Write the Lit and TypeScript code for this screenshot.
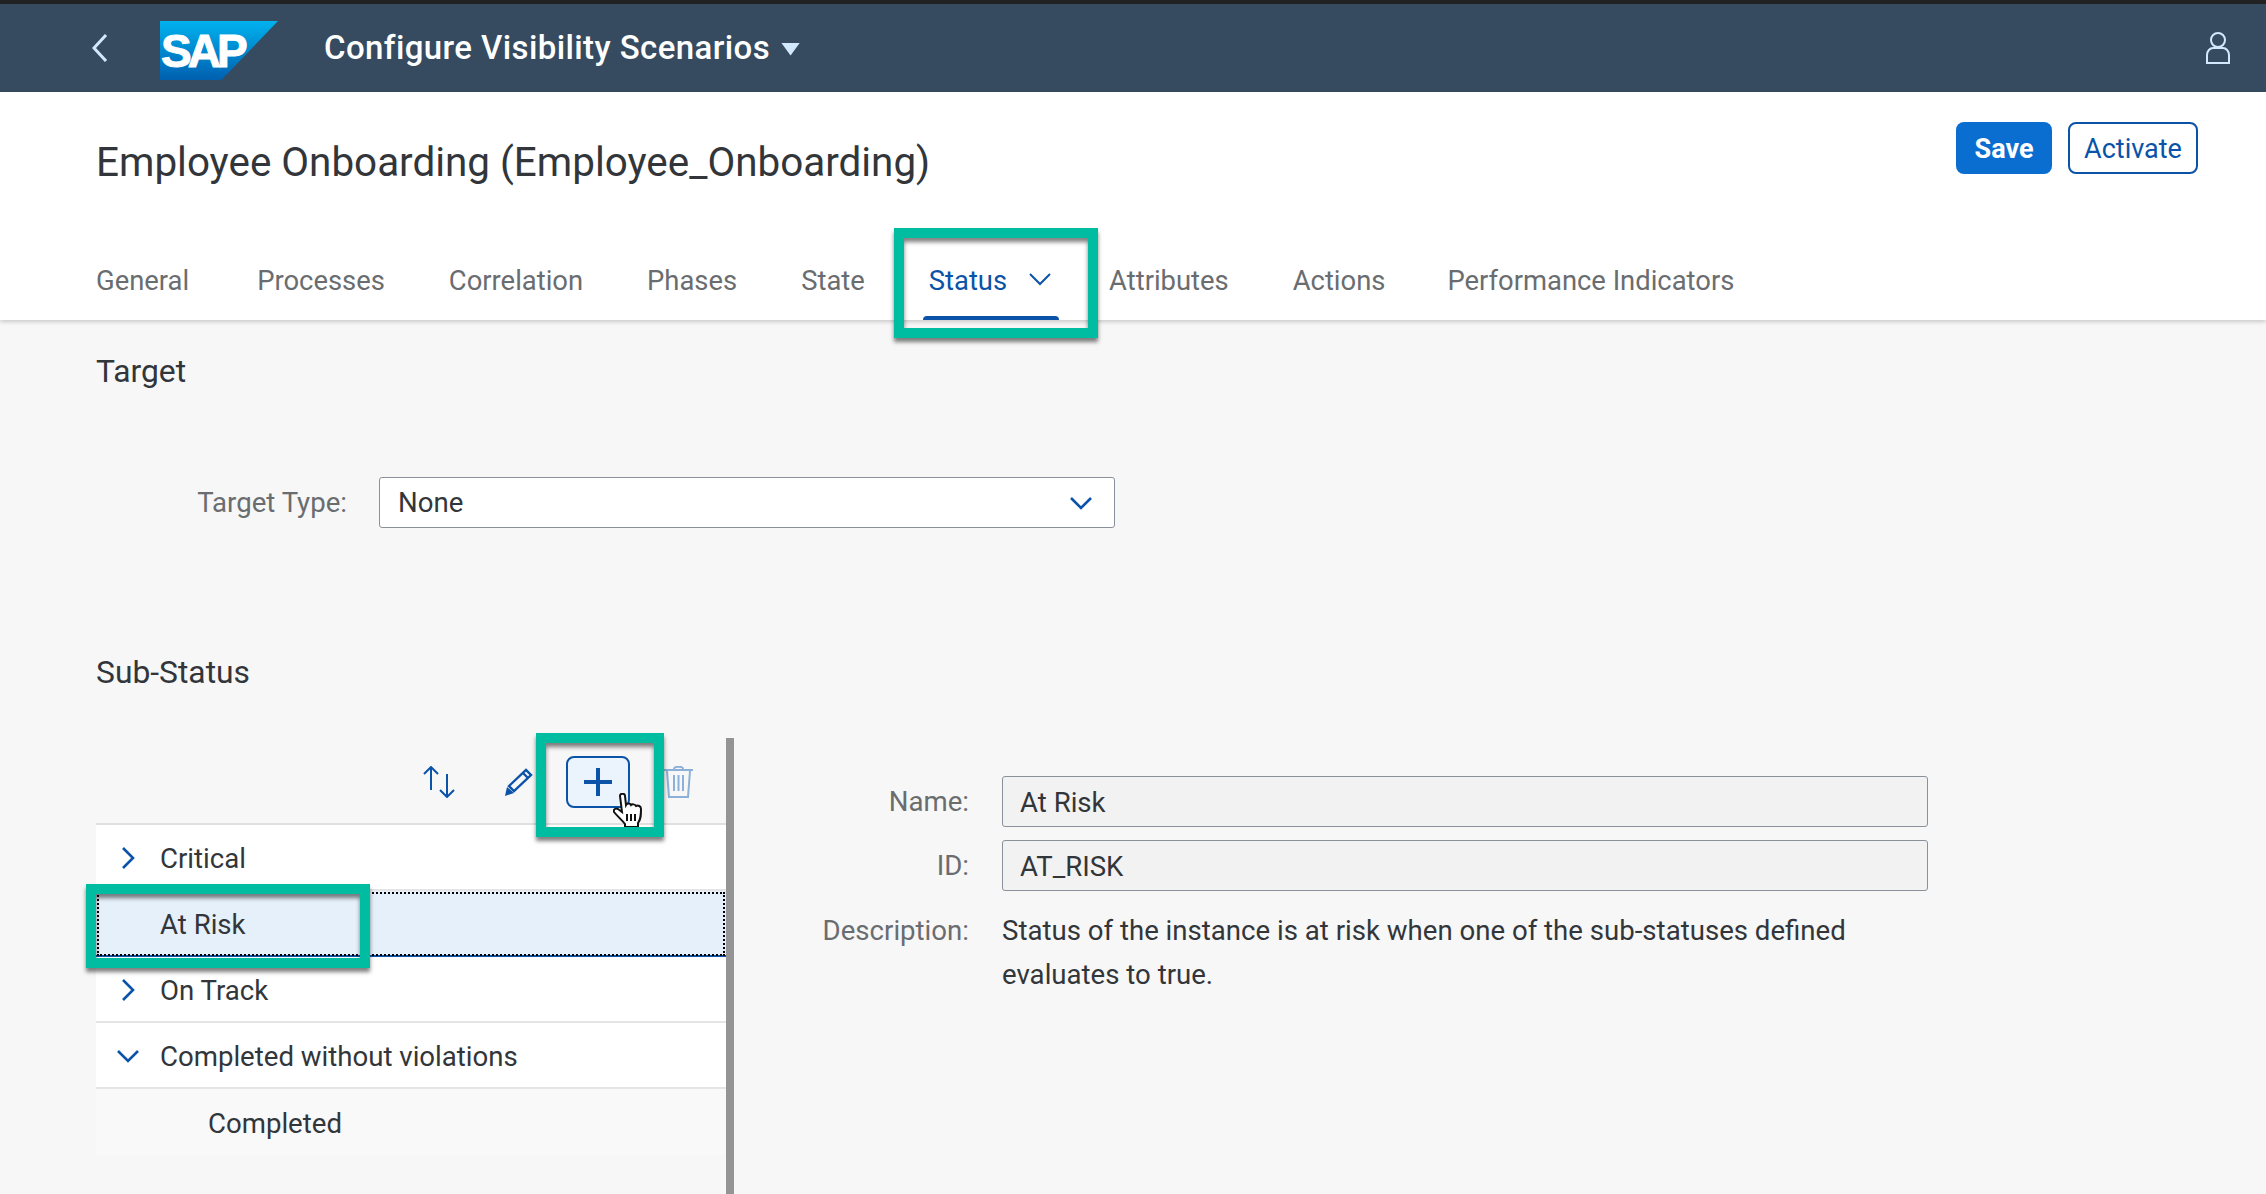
import { LitElement, html, css, svg } from "lit";
import { customElement } from "lit/decorators.js";

const chevronRight = html`<svg class="chev" width="14" height="22" viewBox="0 0 14 22"><path d="M2 1l10 10L2 21" fill="none" stroke="#0a53a8" stroke-width="2.6"/></svg>`;
const chevronDown = html`<svg class="chev" width="22" height="14" viewBox="0 0 22 14"><path d="M1 2l10 10L21 2" fill="none" stroke="#0a53a8" stroke-width="2.6"/></svg>`;

@customElement("app-root")
export class AppRoot extends LitElement {
  static styles = css`
    :host {
      display: block;
      position: relative;
      height: 1194px;
      overflow: hidden;
      background: #f7f7f7;
      color: #32363a;
      font-family: Roboto, sans-serif;
      font-size: 27.6px;
    }

    .shell {
      height: 88px;
      border-top: 4px solid #222;
      background: #364b60;
      display: flex;
      align-items: center;
      padding: 0 36px 0 92px;
    }
    .logo {
      position: relative;
      width: 118px;
      height: 59px;
      margin-left: 52px;
      margin-right: 46px;
      margin-top: 5px;
      background: linear-gradient(#00b2ee, #0060b0);
      clip-path: polygon(0 0, 100% 0, 52% 100%, 0 100%);
    }
    .logo span {
      position: absolute;
      left: 1px;
      top: 8px;
      font: bold 46px/44px "Liberation Sans", sans-serif;
      letter-spacing: -4px;
      color: #fff;
      -webkit-text-stroke: 1px #fff;
    }
    .app-title {
      color: #fff;
      font-size: 33px;
      font-weight: 500;
      letter-spacing: 0.4px;
      line-height: 40px;
    }
    .caret {
      width: 19px;
      height: 13px;
      margin-left: 11px;
      margin-top: 2px;
      background: #d1e8ff;
      clip-path: polygon(0 0, 100% 0, 50% 100%);
    }
    .user { margin-left: auto; }

    .head {
      height: 228px;
      background: #fff;
      box-shadow: 0 2px 4px rgba(0, 0, 0, 0.18);
      padding: 0 68px 0 96px;
      box-sizing: border-box;
      display: flex;
      flex-direction: column;
    }
    .title-row {
      display: flex;
      justify-content: space-between;
      align-items: flex-start;
      height: 167px;
    }
    h1 {
      margin: 45px 0 0;
      font-size: 40.4px;
      font-weight: 400;
      line-height: 52px;
    }
    .actions {
      display: flex;
      gap: 16px;
      margin-top: 30px;
    }
    .btn {
      height: 52px;
      box-sizing: border-box;
      border-radius: 8px;
      padding-top: 2px;
      display: flex;
      align-items: center;
      justify-content: center;
      font-size: 27px;
    }
    .btn.save {
      width: 96px;
      background: #0a6ed1;
      color: #fff;
      font-weight: 700;
    }
    .btn.activate {
      width: 130px;
      background: #fff;
      border: 2px solid #0a53a8;
      color: #0a53a8;
    }

    .tabs {
      display: flex;
      gap: 64px;
      height: 61px;
      color: #6a6d70;
      font-size: 27.4px;
    }
    .tab {
      position: relative;
      display: flex;
      align-items: flex-start;
      line-height: 44px;
    }
    .tab:first-child { margin-right: 4px; }
    .tab:last-child { margin-left: -2px; }
    .tab.on { color: #0a53a8; margin-right: -6px; }
    .tab.on svg { margin-left: 22px; margin-top: 14px; }
    .tab.on::after {
      content: "";
      position: absolute;
      left: -6px;
      right: -8px;
      bottom: 0;
      height: 4px;
      background: #0a53a8;
      border-radius: 4px 4px 0 0;
    }

    .content { padding: 0 0 0 96px; }
    h2 {
      margin: 0;
      font-size: 31.8px;
      font-weight: 400;
      line-height: 44px;
    }
    .target-head { padding-top: 29px; }
    .target-row {
      display: flex;
      align-items: center;
      margin-top: 84px;
    }
    .label {
      color: #6a6d70;
      text-align: right;
    }
    .target-row .label { width: 251px; }
    .select {
      margin-left: 32px;
      width: 736px;
      height: 51px;
      box-sizing: border-box;
      background: #fff;
      border: 1.5px solid #89919a;
      border-radius: 3px;
      padding: 0 22px 0 18px;
      display: flex;
      align-items: center;
      justify-content: space-between;
    }
    .sub-head { margin-top: 122px; }

    .split {
      display: flex;
      margin-top: 44px;
    }
    .tree { width: 630px; }
    .bar {
      height: 87px;
      box-sizing: border-box;
      border-bottom: 2px solid #e0e0e0;
      display: flex;
      align-items: flex-start;
      padding: 26px 33px 0 0;
      justify-content: flex-end;
    }
    .bar svg { display: block; }
    .bar .sort { margin-right: 49px; margin-top: 2px; }
    .bar .pen { margin-right: 33px; margin-top: 4px; }
    .bar .bin { margin-top: 2px; }
    .add {
      position: relative;
      width: 64px;
      height: 52px;
      box-sizing: border-box;
      border: 2px solid #0a53a8;
      border-radius: 8px;
      background: #ebf3fc;
      margin-top: -8px;
      margin-right: 34px;
      display: flex;
      align-items: center;
      justify-content: center;
    }
    .hand {
      position: absolute;
      left: 45px;
      top: 35px;
      z-index: 3;
    }
    .row {
      height: 66px;
      box-sizing: border-box;
      background: #fff;
      display: flex;
      align-items: center;
      border-bottom: 2px solid #e5e5e5;
      padding: 2px 0 0 64px;
      position: relative;
    }
    .row .arrow {
      position: absolute;
      left: 16px;
      width: 32px;
      display: flex;
      justify-content: center;
    }
    .row.sel {
      background: #e5f0fa;
      border-bottom: 2px solid #0a53a8;
      outline: 2px dotted #000;
      outline-offset: -3px;
    }
    .row.child {
      background: #f9f9f9;
      border-bottom: 0;
      padding-left: 112px;
    }
    .sash {
      width: 8px;
      height: 456px;
      background: #949494;
    }
    .details {
      padding-top: 38px;
      display: grid;
      grid-template-columns: 235px 926px;
      column-gap: 33px;
      row-gap: 13px;
      align-items: center;
      align-content: start;
    }
    .field {
      height: 51px;
      box-sizing: border-box;
      background: #f2f2f2;
      border: 1.5px solid #89919a;
      border-radius: 3px;
      padding: 1px 17px 0;
      display: flex;
      align-items: center;
    }
    .desc { line-height: 44px; padding-top: 5px; }
    .details .top { align-self: start; padding-top: 5px; line-height: 44px; }

    .mark {
      position: absolute;
      box-sizing: border-box;
      border: 10px solid #00bca0;
      box-shadow: 0 4px 4px rgba(0, 0, 0, 0.5), inset 0 4px 4px rgba(0, 0, 0, 0.5);
      pointer-events: none;
    }
    .mark.status { left: 894px; top: 228px; width: 204px; height: 110px; }
    .mark.plus { left: 536px; top: 733px; width: 128px; height: 104px; }
    .mark.risk { left: 86px; top: 884px; width: 284px; height: 84px; }
  `;

  renderIcons() {
    return {
      sort: html`<svg class="sort" width="32" height="32" viewBox="0 0 32 32" fill="none" stroke="#0a53a8" stroke-width="2"><path d="M8 24V1M1 8l7-7 7 7M24 8v23M17 24l7 7 7-7"/></svg>`,
      pen: html`<svg class="pen" width="29" height="29" viewBox="0 0 29 29" fill="none" stroke="#0a53a8" stroke-width="2.4"><path d="M5 18L22 2l5 5-17 16zM19 5l5 5"/><path d="M1 28l2-9 7 6z" fill="#0a53a8" stroke="none"/></svg>`,
      plus: html`<svg width="28" height="28" viewBox="0 0 28 28"><path d="M14 0v28M0 14h28" stroke="#0a53a8" stroke-width="4"/></svg>`,
      trash: html`<svg class="bin" width="29" height="32" viewBox="0 0 29 32" fill="none" stroke="#8db0d8" stroke-width="2"><path d="M0 4h29M10 3c0-3 9-3 9 0M3 5l2 26h19l2-26M10 9v16M14.500 9v16M19 9v16"/></svg>`,
    };
  }

  render() {
    const ic = this.renderIcons();
    return html`
      <div class="shell">
        <svg width="16" height="28" viewBox="0 0 16 28"><path d="M14 1L2 14l12 13" fill="none" stroke="#d1e8ff" stroke-width="3"/></svg>
        <div class="logo"><span>SAP</span></div>
        <div class="app-title">Configure Visibility Scenarios</div>
        <div class="caret"></div>
        <svg class="user" width="24" height="32" viewBox="0 0 24 32" fill="none" stroke="#d1e8ff" stroke-width="2">${svg`<circle cx="12" cy="8" r="7"/><path d="M1 31V23c0-4 3-7 6-7h10c3 0 6 3 6 7v8z"/>`}</svg>
      </div>
      <div class="head">
        <div class="title-row">
          <h1>Employee Onboarding (Employee_Onboarding)</h1>
          <div class="actions">
            <div class="btn save">Save</div>
            <div class="btn activate">Activate</div>
          </div>
        </div>
        <div class="tabs">
          <div class="tab">General</div>
          <div class="tab">Processes</div>
          <div class="tab">Correlation</div>
          <div class="tab">Phases</div>
          <div class="tab">State</div>
          <div class="tab on">Status<svg width="22" height="13" viewBox="0 0 22 13"><path d="M1 1l10 10L21 1" fill="none" stroke="#0a53a8" stroke-width="2"/></svg></div>
          <div class="tab">Attributes</div>
          <div class="tab">Actions</div>
          <div class="tab">Performance Indicators</div>
        </div>
      </div>
      <div class="content">
        <h2 class="target-head">Target</h2>
        <div class="target-row">
          <div class="label">Target Type:</div>
          <div class="select">None ${chevronDown}</div>
        </div>
        <h2 class="sub-head">Sub-Status</h2>
        <div class="split">
          <div class="tree">
            <div class="bar">
              ${ic.sort}${ic.pen}
              <div class="add">
                ${ic.plus}
                <svg class="hand" width="32" height="34" viewBox="0 0 32 34"><path d="M7 3c0-3 5-3 5 0l1 9c1-2 4-2 5 0 1-1 4-1 5 1 2-1 5 0 5 3 0 6 0 10-3 14v4H12v-3C9 27 5 24 1 19c-1-3 2-4 4-3l4 3z" fill="#fff" stroke="#111" stroke-width="2"/><path d="M14 21v7M18 21v7M22 21v7" stroke="#111" stroke-width="2"/></svg>
              </div>
              ${ic.trash}
            </div>
            <div class="row"><span class="arrow">${chevronRight}</span>Critical</div>
            <div class="row sel">At Risk</div>
            <div class="row"><span class="arrow">${chevronRight}</span>On Track</div>
            <div class="row"><span class="arrow">${chevronDown}</span>Completed without violations</div>
            <div class="row child">Completed</div>
          </div>
          <div class="sash"></div>
          <div class="details">
            <div class="label">Name:</div>
            <div class="field">At Risk</div>
            <div class="label">ID:</div>
            <div class="field">AT_RISK</div>
            <div class="label top">Description:</div>
            <div class="desc">Status of the instance is at risk when one of the sub-statuses defined<br />evaluates to true.</div>
          </div>
        </div>
      </div>
      <div class="mark status"></div>
      <div class="mark plus"></div>
      <div class="mark risk"></div>
    `;
  }
}
